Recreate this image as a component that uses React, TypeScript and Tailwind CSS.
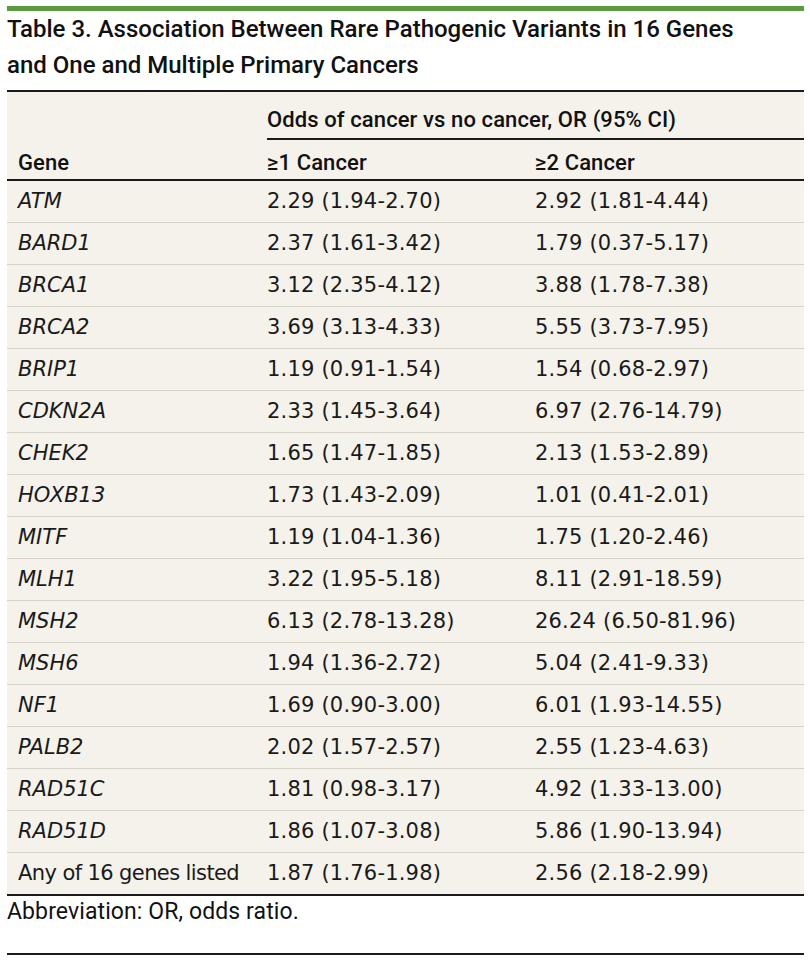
import React from "react";

const rows: [string, string, string][] = [
  ["ATM", "2.29 (1.94-2.70)", "2.92 (1.81-4.44)"],
  ["BARD1", "2.37 (1.61-3.42)", "1.79 (0.37-5.17)"],
  ["BRCA1", "3.12 (2.35-4.12)", "3.88 (1.78-7.38)"],
  ["BRCA2", "3.69 (3.13-4.33)", "5.55 (3.73-7.95)"],
  ["BRIP1", "1.19 (0.91-1.54)", "1.54 (0.68-2.97)"],
  ["CDKN2A", "2.33 (1.45-3.64)", "6.97 (2.76-14.79)"],
  ["CHEK2", "1.65 (1.47-1.85)", "2.13 (1.53-2.89)"],
  ["HOXB13", "1.73 (1.43-2.09)", "1.01 (0.41-2.01)"],
  ["MITF", "1.19 (1.04-1.36)", "1.75 (1.20-2.46)"],
  ["MLH1", "3.22 (1.95-5.18)", "8.11 (2.91-18.59)"],
  ["MSH2", "6.13 (2.78-13.28)", "26.24 (6.50-81.96)"],
  ["MSH6", "1.94 (1.36-2.72)", "5.04 (2.41-9.33)"],
  ["NF1", "1.69 (0.90-3.00)", "6.01 (1.93-14.55)"],
  ["PALB2", "2.02 (1.57-2.57)", "2.55 (1.23-4.63)"],
  ["RAD51C", "1.81 (0.98-3.17)", "4.92 (1.33-13.00)"],
  ["RAD51D", "1.86 (1.07-3.08)", "5.86 (1.90-13.94)"],
];

const head = "font-['Roboto',sans-serif]";
const data = "font-['DejaVu_Sans',sans-serif] text-[21px] text-[#1a1a1a]";

export default function App() {
  return (
    <div className="w-[810px] min-h-[961px] bg-white pt-[6px]">
      <div className="ml-[7px] w-[797px]">
        <div className="h-[5px] bg-[#5b9a3e]" />
        <h1
          className={`${head} text-[24px] leading-[36px] font-medium tracking-[0px] text-[#111]`}
        >
          Table 3. Association Between Rare Pathogenic Variants in 16 Genes
          <br />
          and One and Multiple Primary Cancers
        </h1>
        <div className="mt-[7px] border-t-2 border-b-2 border-[#1a1a1a] bg-[#f4f2eb]">
          <div className="grid grid-cols-[260px_1fr] h-[48px]">
            <div />
            <div
              className={`${head} text-[22px] leading-[26px] font-medium tracking-[0.1px] text-[#111] flex items-end pb-[5px] border-b-2 border-[#1a1a1a]`}
            >
              Odds of cancer vs no cancer, OR (95% CI)
            </div>
          </div>
          <div
            className={`${head} grid grid-cols-[260px_268px_1fr] h-[41px] border-b-2 border-[#1a1a1a] text-[22px] leading-[26px] font-medium tracking-[0.1px] text-[#111]`}
          >
            <div className="pl-[11px] flex items-end pb-[3px]">Gene</div>
            <div className="flex items-end pb-[3px]">≥1 Cancer</div>
            <div className="flex items-end pb-[3px]">≥2 Cancer</div>
          </div>
          {rows.map(([g, a, b]) => (
            <div
              key={g}
              className={`${data} grid grid-cols-[260px_268px_1fr] h-[42px] border-b border-[#d6d3c9] items-center`}
            >
              <div className="pl-[11px] italic">{g}</div>
              <div className="tracking-[0.2px]">{a}</div>
              <div className="tracking-[0.2px]">{b}</div>
            </div>
          ))}
          <div
            className={`${data} grid grid-cols-[260px_268px_1fr] h-[41px] items-center`}
          >
            <div className="pl-[11px] tracking-[-0.6px]">Any of 16 genes listed</div>
            <div className="tracking-[0.2px]">1.87 (1.76-1.98)</div>
            <div className="tracking-[0.2px]">2.56 (2.18-2.99)</div>
          </div>
        </div>
        <p className={`${head} mt-[3px] text-[23px] leading-[26px] tracking-[0.1px] text-[#111]`}>
          Abbreviation: OR, odds ratio.
        </p>
        <div className="mt-[28px] h-[2px] bg-[#1a1a1a]" />
      </div>
    </div>
  );
}
